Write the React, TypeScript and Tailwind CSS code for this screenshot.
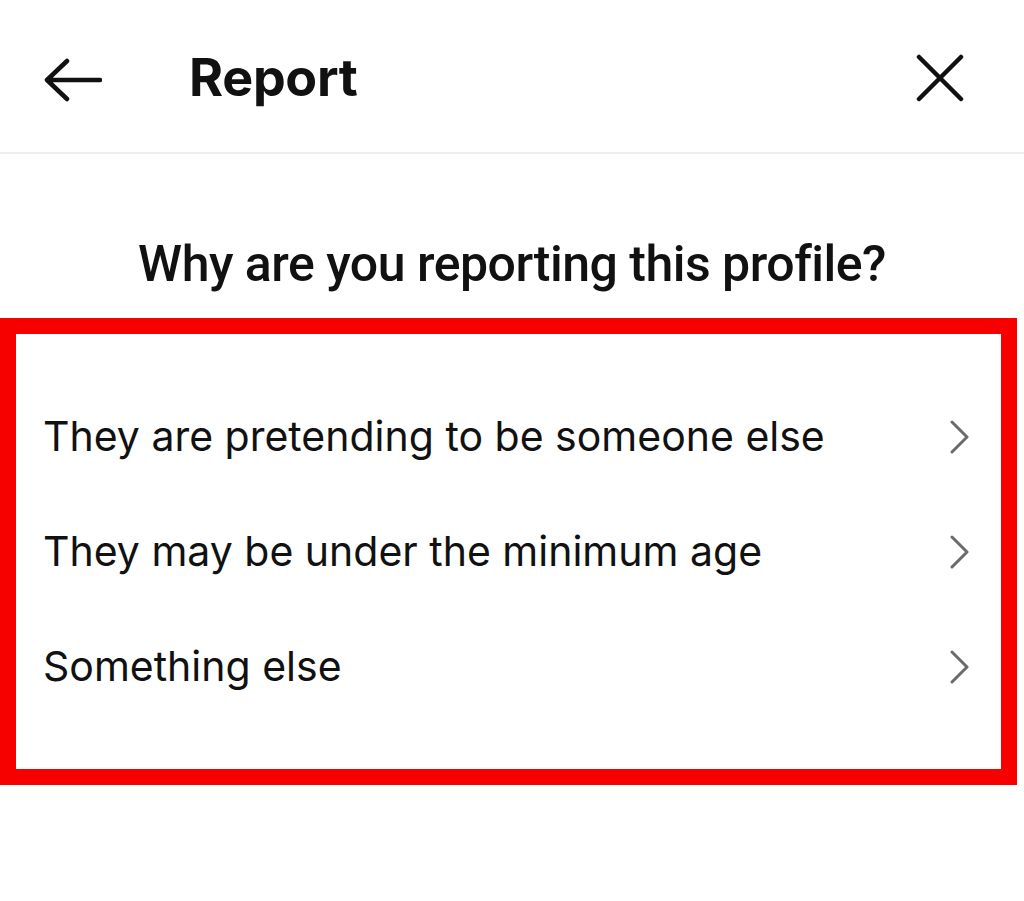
import React from "react";

function Chevron() {
  return (
    <svg width="22" height="34" viewBox="0 0 22 34" fill="none" className="shrink-0">
      <path d="M3 2 L18 17 L3 32" stroke="#6b6b6b" strokeWidth="3" strokeLinecap="round" strokeLinejoin="round" />
    </svg>
  );
}

const items = [
  "They are pretending to be someone else",
  "They may be under the minimum age",
  "Something else",
];

export default function App() {
  return (
    <div className="w-[1024px] h-[901px] bg-white overflow-hidden" style={{ fontFamily: "Inter, 'Noto Sans', sans-serif" }}>
      <header className="h-[154px] flex items-center border-b-2 border-[#efefef] pl-[44px] pr-[60px] pt-[8px]">
        <svg width="58" height="44" viewBox="0 0 58 44" fill="none" className="shrink-0">
          <path d="M23 3 L3 22 L23 41 M3 22 H56" stroke="#111" strokeWidth="4.5" strokeLinecap="round" strokeLinejoin="round" />
        </svg>
        <h1 className="ml-[87px] text-[52px] font-bold text-[#111] tracking-[-0.3px] leading-none -mt-[4px]">Report</h1>
        <div className="flex-1" />
        <svg width="48" height="48" viewBox="0 0 48 48" fill="none" className="shrink-0 -mt-[4px]">
          <path d="M3 3 L45 45 M45 3 L3 45" stroke="#111" strokeWidth="4.5" strokeLinecap="round" />
        </svg>
      </header>
      <div className="h-[164px] pt-[85px] text-center">
        <h2 className="text-[50px] font-medium text-[#111] tracking-[-0.5px] leading-none" style={{ fontFamily: "Roboto, sans-serif" }}>
          Why are you reporting this profile?
        </h2>
      </div>
      <div className="w-[1017px] h-[467px] border-[16px] border-[#f70000] pt-[45px]">
        {items.map((t) => (
          <div key={t} className="h-[115px] flex items-center justify-between pl-[27px] pr-[30px]">
            <span className="text-[41px] text-[#111] leading-none">{t}</span>
            <Chevron />
          </div>
        ))}
      </div>
    </div>
  );
}
